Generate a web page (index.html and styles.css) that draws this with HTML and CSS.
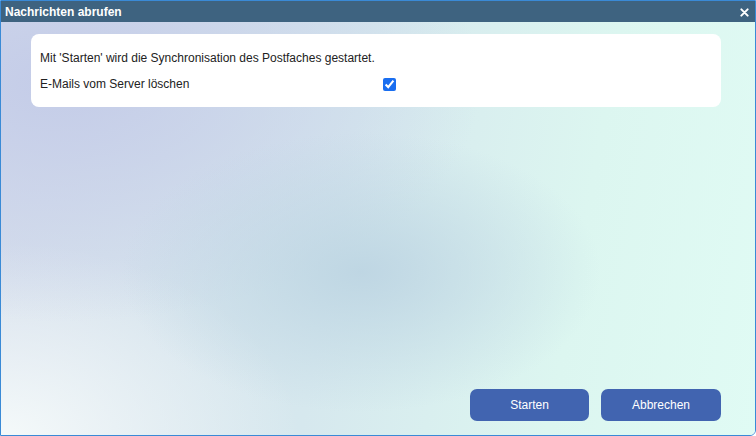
FILE: index.html
```html
<!DOCTYPE html>
<html lang="de">
<head>
  <meta charset="UTF-8" />
  <title>Nachrichten abrufen</title>
  <link rel="stylesheet" href="styles.css">
</head>
<body>
  <div class="dialog">
    <div class="titlebar">
      <span class="title">Nachrichten abrufen</span>
      <span class="close" aria-label="Schließen">
        <svg viewBox="0 0 10 10" width="9" height="9">
          <path d="M1.5 1.5 L8.5 8.5 M8.5 1.5 L1.5 8.5" stroke="#fff" stroke-width="2.2" stroke-linecap="round"/>
        </svg>
      </span>
    </div>
    <div class="content">
      <div class="card">
        <p class="info">Mit 'Starten' wird die Synchronisation des Postfaches gestartet.</p>
        <label class="row">
          <span class="label">E-Mails vom Server löschen</span>
          <input type="checkbox" checked>
        </label>
      </div>
      <div class="buttons">
        <button class="btn">Starten</button>
        <button class="btn">Abbrechen</button>
      </div>
    </div>
  </div>
</body>
</html>
```

FILE: styles.css
```css
html, body {
  margin: 0;
  height: 100%;
}
body {
  font-family: "Liberation Sans", Arial, sans-serif;
  background: #fff;
}
.dialog {
  box-sizing: border-box;
  width: 756px;
  height: 436px;
  border: 1px solid #3a8ad6;
  border-radius: 0 0 6px 0;
  display: flex;
  flex-direction: column;
  overflow: hidden;
}
.titlebar {
  height: 21px;
  background: #3e6380;
  display: flex;
  align-items: center;
  justify-content: space-between;
  padding: 0 6px 0 4px;
  flex-shrink: 0;
}
.title {
  color: #fff;
  font-weight: bold;
  font-size: 12px;
}
.close {
  display: flex;
  margin-top: 2px;
}
.content {
  flex: 1;
  display: flex;
  flex-direction: column;
  justify-content: space-between;
  padding: 12px 34px 14px 30px;
  background:
    radial-gradient(ellipse 240px 140px at 360px 250px, rgba(188, 212, 226, 0.9), rgba(188, 212, 226, 0) 100%),
    radial-gradient(ellipse 420px 240px at 60px 60px, rgba(196, 204, 232, 1), rgba(196, 204, 232, 0) 100%),
    radial-gradient(ellipse 300px 200px at 0px 420px, rgba(245, 250, 250, 1), rgba(245, 250, 250, 0) 100%),
    linear-gradient(100deg, #d6deec 0%, #d6e8ee 45%, #dcf6f0 75%, #e0fbf4 100%);
}
.card {
  background: #fff;
  border-radius: 8px;
  padding: 13px 10px 16px 9px;
}
.info {
  margin: 4px 0 12px;
  font-size: 12px;
  color: #222;
}
.row {
  display: flex;
  align-items: center;
  font-size: 12px;
  color: #222;
}
.label {
  width: 343px;
}
.row input {
  margin: 0;
  width: 13px;
  height: 13px;
  accent-color: #1a6ef0;
}
.buttons {
  display: flex;
  justify-content: flex-end;
  gap: 12px;
}
.btn {
  width: 120px;
  height: 32px;
  border: none;
  border-radius: 7px;
  background: #4164b0;
  color: #fff;
  font-family: "Liberation Sans", Arial, sans-serif;
  font-size: 12px;
}
.btn:first-child {
  width: 119px;
}
```
